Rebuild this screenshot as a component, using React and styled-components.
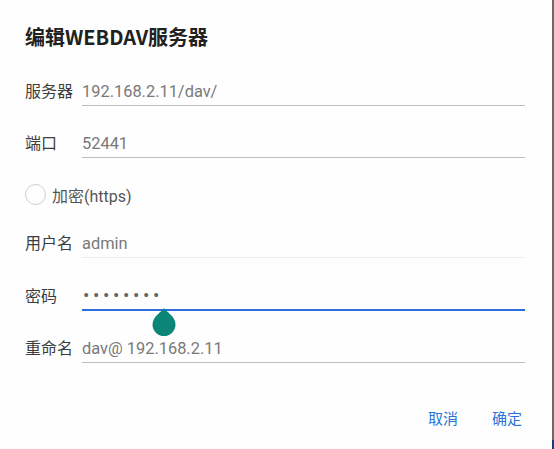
import styled, { createGlobalStyle } from 'styled-components'

const GlobalStyle = createGlobalStyle`
  html, body {
    margin: 0;
    padding: 0;
  }
  body {
    width: 554px;
    height: 449px;
    overflow: hidden;
    background: linear-gradient(to bottom, #6a6a6a 0, #6a6a6a 440px, #1f3d6c 440px);
    font-family: Roboto, "Noto Sans CJK SC", sans-serif;
  }
`

const Dialog = styled.div`
  box-sizing: border-box;
  width: 552px;
  height: 449px;
  background: #fefefe;
  padding: 25px 27px 0 25px;
  display: flex;
  flex-direction: column;
`

const Title = styled.h1`
  margin: 0 0 30px;
  font-family: "Noto Sans CJK SC", Roboto, sans-serif;
  font-size: 20px;
  line-height: 24px;
  font-weight: 700;
  color: #212121;
`

const Form = styled.div`
  display: flex;
  flex-direction: column;
  gap: 25px;
`

const Field = styled.div`
  display: flex;
  align-items: flex-end;
`

const Label = styled.span`
  width: 57px;
  flex: none;
  font-size: 16px;
  line-height: 26px;
  color: #3d3d3d;
  margin-bottom: 1px;
`

const Input = styled.div`
  position: relative;
  flex: 1;
  height: 26px;
  line-height: 26px;
  font-size: 16.4px;
  color: #797979;
  border-bottom: ${({ $focused, $faint }) =>
    $focused ? '2px solid #2c6fdc' : $faint ? '1px solid #ececec' : '1px solid #bdbdbd'};
`

const Dots = styled.span`
  font-size: 19px;
  letter-spacing: 3.6px;
  color: #666;
  padding-left: 1px;
`

const Handle = styled.svg`
  position: absolute;
  left: 70px;
  top: 25px;
`

const CheckRow = styled.label`
  display: flex;
  align-items: center;
  height: 23px;
  gap: 6px;
  font-size: 16px;
  color: #555;
`

const Radio = styled.span`
  box-sizing: border-box;
  width: 21px;
  height: 21px;
  border-radius: 50%;
  border: 1.5px solid #cfcfcf;
`

const Actions = styled.div`
  margin-top: auto;
  margin-bottom: 21px;
  display: flex;
  justify-content: flex-end;
  gap: 34px;
  padding-right: 3px;
`

const Action = styled.button`
  border: 0;
  background: none;
  padding: 0;
  font-family: "Noto Sans CJK SC", sans-serif;
  font-size: 15px;
  line-height: 20px;
  color: #2a74d8;
  cursor: pointer;
`

export default function App() {
  return (
    <>
      <GlobalStyle />
      <Dialog>
        <Title>编辑WEBDAV服务器</Title>
        <Form>
          <Field>
            <Label>服务器</Label>
            <Input>192.168.2.11/dav/</Input>
          </Field>
          <Field>
            <Label>端口</Label>
            <Input>52441</Input>
          </Field>
          <CheckRow>
            <Radio />
            加密(https)
          </CheckRow>
          <Field>
            <Label>用户名</Label>
            <Input $faint>admin</Input>
          </Field>
          <Field>
            <Label>密码</Label>
            <Input $focused>
              <Dots>••••••••</Dots>
              <Handle width="24" height="29" viewBox="0 0 24 29">
                <path d="M12 0 C13 3 23.5 8 23.5 16.5 A11.5 11.5 0 0 1 0.5 16.5 C0.5 8 11 3 12 0 Z" fill="#0a8576" />
              </Handle>
            </Input>
          </Field>
          <Field>
            <Label>重命名</Label>
            <Input>dav@ 192.168.2.11</Input>
          </Field>
        </Form>
        <Actions>
          <Action>取消</Action>
          <Action>确定</Action>
        </Actions>
      </Dialog>
    </>
  )
}
